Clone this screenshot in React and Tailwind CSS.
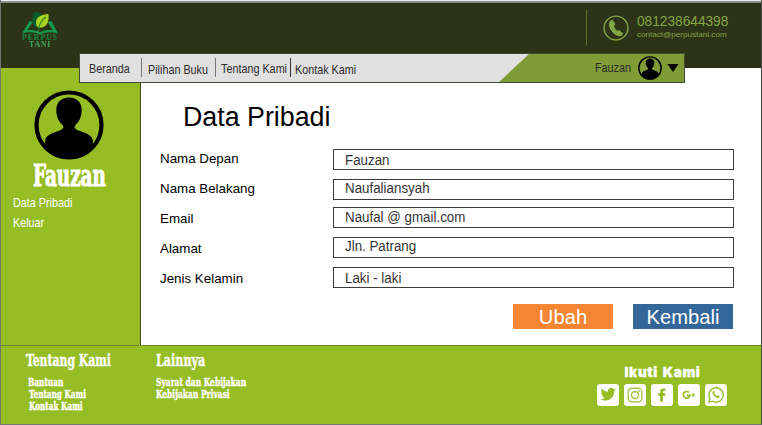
const sans = "font-['Liberation_Sans',Arial,sans-serif]";
const slab = "font-['DejaVu_Serif_Condensed','DejaVu_Serif',serif] font-bold text-white whitespace-nowrap origin-left w-0";

function Avatar({ className }) {
  return (
    <svg viewBox="0 0 70 70" className={className}>
      <circle cx="35" cy="35" r="32.500" fill="none" stroke="#000" strokeWidth="4.200" />
      <path
        d="M35 7.500C27 7.500 22.300 12.500 22.300 20C22.300 27 25 31.500 28 34.500C30.500 37 29.500 39 25.500 40.500C20 42.500 11.200 45 11.200 50.500V57C17 64 25 68.500 35 68.500S53 64 58.800 57V50.500C58.800 45 50 42.500 44.500 40.500C40.500 39 39.500 37 42 34.500C45 31.500 47.700 27 47.700 20C47.700 12.500 43 7.500 35 7.500z"
        fill="#000"
      />
    </svg>
  );
}

function Logo() {
  return (
    <svg viewBox="0 0 42 40" className="block h-10 w-[42px]">
      <path d="M10.500 10L3 22.500C9.500 20.500 16 20.800 21 23.500C26 20.800 32.500 20.500 39 22.500L32.500 10L28.500 11L34 19.500C29 18.500 25 19 21 21.500C17 19 13 18.500 8 19.500L14 11z" fill="#12994a" />
      <path d="M16 0.500C12.500 5 12 10 15.500 15.500L19 17.500C16.500 11 18 6.500 23.500 4.500C21.500 2 19 1 16 0.500z" fill="#0b5a2c" />
      <path d="M29.500 3C22 3.500 17 6 17 11.500C17 13.500 17.500 15 19 16.500C26 17.500 30.500 13.500 29.500 3z" fill="#a6d321" />
      <path d="M27 6C22.500 9 19.500 13 19.500 21" fill="none" stroke="#2a7a25" strokeWidth="1.100" />
    </svg>
  );
}

function PhoneIcon() {
  return (
    <svg viewBox="0 0 26 26" className="block h-[26px] w-[26px] shrink-0">
      <circle cx="13" cy="13" r="11.900" fill="none" stroke="#83a542" strokeWidth="1.400" />
      <path d="M7.300 6.500L9.300 5.300L11.700 9.300L10.300 10.700C10.700 13 12.300 15.300 14.300 16.600L16.200 15.700L19.500 18.700L18.200 20.300C12.500 22 4.300 12.500 7.300 6.500z" fill="#83a542" stroke="#83a542" strokeWidth="1.200" strokeLinejoin="round" />
    </svg>
  );
}

const fields = [
  ["Nama Depan", "Fauzan", "mb-[9px]", "leading-[20px]", "leading-[21px]"],
  ["Nama Belakang", "Naufaliansyah", "mb-[7px]", "leading-[20px]", "leading-[18px]"],
  ["Email", "Naufal @ gmail.com", "mb-[9px]", "leading-[23px]", "leading-[19px]"],
  ["Alamat", "Jln. Patrang", "mb-[9px]", "leading-[23px]", "leading-[18px]"],
  ["Jenis Kelamin", "Laki - laki", "mb-0", "leading-[23px]", "leading-[21px]"],
];

const social = [
  <path key="t" transform="translate(-2 -1.700) scale(1.140)" d="M19 6.500c-.5.300-1 .400-1.600.500.600-.400 1-.900 1.200-1.600-.600.300-1.200.600-1.800.700a2.900 2.900 0 0 0-5 2.600C9.400 8.600 7.300 7.500 5.900 5.700c-.800 1.300-.400 3 .9 3.900-.5 0-.9-.1-1.300-.4 0 1.400.9 2.600 2.300 2.900-.4.100-.9.100-1.300 0 .4 1.200 1.400 2 2.700 2-1.300 1-2.800 1.400-4.300 1.200C11 19 17.600 15 17.500 8.200c.6-.4 1.100-1 1.500-1.700z" fill="#96bd24" />,
  <g key="i" fill="none" stroke="#96bd24" strokeWidth="1.200"><rect x="4.300" y="4.300" width="14.400" height="14.400" rx="4" /><circle cx="11.500" cy="11.500" r="3.600" /><circle cx="15.700" cy="7.300" r=".3" /></g>,
  <path key="f" d="M9.600 18.500v-6H7.800V9.500h1.800V8c0-2.200 1.100-3.300 3.300-3.300h2v2.500h-1.400c-.8 0-1 .3-1 1v1.300h2.400l-.4 3h-2v6z" fill="#96bd24" />,
  <g key="g" fill="none" stroke="#96bd24" strokeWidth="1.700"><path d="M11.600 8.900a3.500 3.500 0 1 0 .9 3H9" /><path d="M14 11.500h4M16 9.500v4" strokeWidth="1.300" /></g>,
  <g key="w"><path d="M4 19l1.100-3.800a7.500 7.500 0 1 1 2.900 2.800z" fill="none" stroke="#96bd24" strokeWidth="1.400" /><path d="M8.300 7.500c.6-.5 1.200-.4 1.400.2l.5 1.300c.1.500-.6.900-.6 1.200.6 1.200 1.600 2 2.700 2.400.4 0 .8-1 1.200-.9l1.600.8c.4.300 0 1.400-.7 1.800-2.700 1.300-8-3.700-6.100-6.800z" fill="#96bd24" /></g>,
];

export default function App() {
  return (
    <div className={`relative flex h-[425px] w-[762px] flex-col overflow-hidden border-x border-b border-[#73776f] border-r-[#4a4d45] bg-white ${sans}`}>
      <div className="h-[3px] shrink-0 border-b-2 border-[#8b908c] bg-[#e9eeed]" />
      <header className="flex h-[65px] shrink-0 justify-between bg-[#2d3317]">
        <div className="ml-[18px] w-[42px] pt-2 text-center font-['Liberation_Serif',serif] font-bold">
          <div className="h-[23px]"><Logo /></div>
          <div className="text-[7.900px] leading-[8px] tracking-[0.900px] text-[#17853f]">PERPUS</div>
          <div className="text-[8px] leading-[6px] tracking-[0.600px] text-[#35a85c]">TANI</div>
        </div>
        <div className="mr-[32px] flex pt-[7px]">
          <div className="h-[35px] w-px bg-[#58702b]" />
          <div className="ml-4 pt-[5px]"><PhoneIcon /></div>
          <div className="ml-2 w-[92px] whitespace-nowrap text-[#83a542]">
            <div className="mt-[3px] origin-left scale-y-110 text-[13.700px] leading-[17px]">081238644398</div>
            <div className="text-[8.100px] leading-[9px]">contact@perpustani.com</div>
          </div>
        </div>
      </header>

      <div className="flex h-[277px] shrink-0">
        <aside className="flex w-[140px] shrink-0 flex-col border-r border-[#3f4a1c] bg-[#96bd24]">
          <Avatar className="ml-[33px] mt-[22px] h-[70px] w-[70px] shrink-0" />
          <div className={`${slab} ml-[32px] h-[33px] scale-x-[0.680] text-[30px] leading-[31px] [-webkit-text-stroke:1px_white]`}>Fauzan</div>
          <div className="ml-3 flex flex-col text-[10.800px] leading-[20px] text-white">
            <span className="scale-y-110">Data Pribadi</span>
            <span className="scale-y-110">Keluar</span>
          </div>
        </aside>

        <main className="flex-1 pl-[19px] pt-8">
          <h1 className="ml-[23px] text-[26.800px] leading-[34px] text-black">Data Pribadi</h1>
          <div className="mt-[15px] text-[13.350px]">
            {fields.map(([label, value, gap, labelLead, valueLead]) => (
              <div key={label} className={`flex h-[21px] ${gap}`}>
                <div className={`w-[173px] shrink-0 text-black ${labelLead}`}>{label}</div>
                <div className={`h-[21px] w-[401px] shrink-0 border border-[#3c3c3c] pl-[11px] text-[#333] ${valueLead}`}>
                  <div className="scale-y-105">{value}</div>
                </div>
              </div>
            ))}
          </div>
          <div className="ml-[353px] mt-4 flex gap-5 text-center text-[20.200px] leading-[26px] text-white">
            <div className="h-[25px] w-[100px] bg-[#f68634]">Ubah</div>
            <div className="h-[25px] w-[100px] bg-[#336699]">Kembali</div>
          </div>
        </main>
      </div>

      <footer className="flex flex-1 border-t border-[#6f8430] bg-[#96bd24]">
        <div className="w-[130px] pl-[25px] pt-[5px] [-webkit-text-stroke:0.4px_white]">
          <div className={`${slab} scale-x-[0.690] text-[17.500px] leading-[18px]`}>Tentang Kami</div>
          <div className={`${slab} ml-[2px] mt-[7px] scale-x-[0.710] text-[11.600px] leading-[12px]`}>Bantuan</div>
          <div className={`${slab} ml-[3px] scale-x-[0.700] text-[11.600px] leading-[12px]`}>Tentang Kami</div>
          <div className={`${slab} ml-[3px] scale-x-[0.700] text-[11.600px] leading-[12px]`}>Kontak Kami</div>
        </div>
        <div className="flex-1 pl-[25px] pt-[5px] [-webkit-text-stroke:0.4px_white]">
          <div className={`${slab} scale-x-[0.710] text-[17.500px] leading-[18px]`}>Lainnya</div>
          <div className={`${slab} mt-[7px] scale-x-[0.720] text-[11.600px] leading-[12px]`}>Syarat dan Kebijakan</div>
          <div className={`${slab} scale-x-[0.720] text-[11.600px] leading-[12px]`}>Kebijakan Privasi</div>
        </div>
        <div className="mr-[33px] w-[131px] pt-[18px]">
          <div className="text-center font-['Inter',sans-serif] text-[13.500px] font-black leading-[16px] tracking-[0.650px] text-white [-webkit-text-stroke:0.3px_white] [word-spacing:1.500px]">Ikuti Kami</div>
          <div className="mt-1 flex gap-[5px]">
            {social.map((icon, i) => (
              <svg key={i} viewBox="0 0 23 23" className="h-[22px] w-[22px] rounded-[3px] bg-white">{icon}</svg>
            ))}
          </div>
        </div>
      </footer>

      <nav className="absolute left-[78px] top-[53px] flex h-[30px] w-[606px] border border-[#444a38] bg-[#e0e0e0] text-[10.800px] leading-[32px] text-[#2b2b2b]">
        <div className="flex flex-1 items-start whitespace-nowrap">
          <span className="w-[52px] scale-y-110 pl-[9px] leading-[30px]">Beranda</span>
          <i className="ml-[9px] mt-1 h-[19px] w-px bg-[#777]" />
          <span className="w-[73px] scale-y-110 pl-[6px]">Pilihan Buku</span>
          <i className="mt-1 h-[19px] w-px bg-[#777]" />
          <span className="w-[74px] scale-y-110 pl-[5px] leading-[30px]">Tentang Kami</span>
          <i className="mt-1 h-[19px] w-px bg-[#333]" />
          <span className="scale-y-110 pl-1">Kontak Kami</span>
        </div>
        <div className="flex w-[185px] bg-[#7f9c37] pl-24 [clip-path:polygon(30px_0,100%_0,100%_100%,0_100%)]">
          <span className="w-[43px] scale-y-110 leading-[28px]">Fauzan</span>
          <Avatar className="mt-[2px] h-6 w-6" />
          <svg viewBox="0 0 12 8" className="ml-[5px] mt-[10px] h-2 w-3"><path d="M0.500 0h11L6 8z" fill="#000" /></svg>
        </div>
      </nav>
    </div>
  );
}
